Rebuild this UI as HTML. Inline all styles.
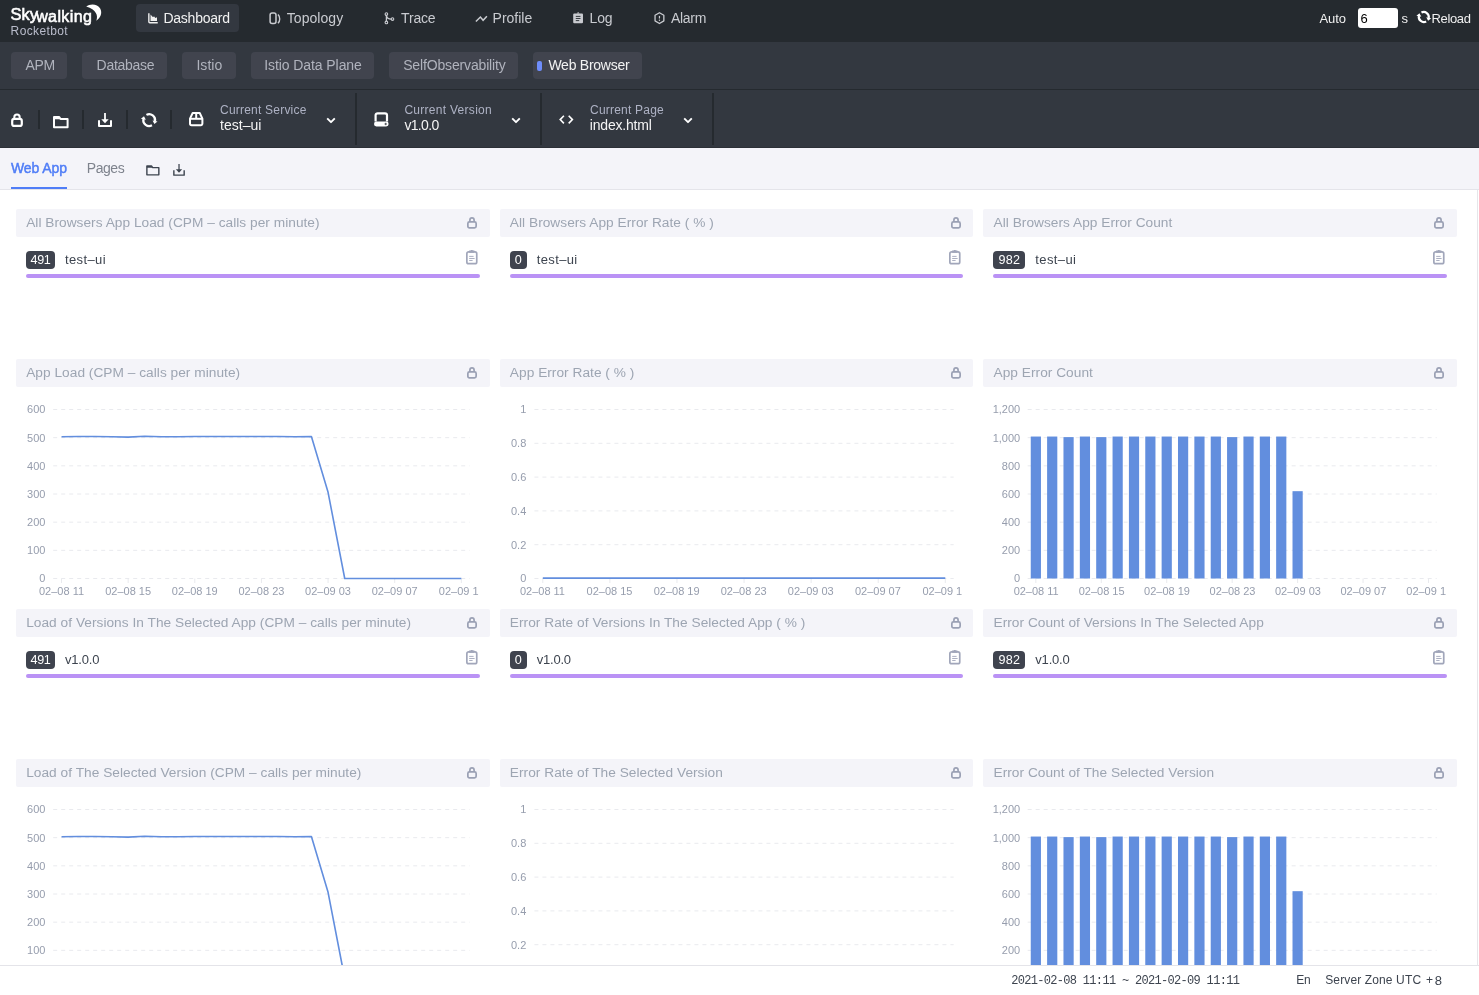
<!DOCTYPE html>
<html lang="en">
<head>
<meta charset="utf-8">
<title>SkyWalking</title>
<style>
*{box-sizing:border-box;margin:0;padding:0}
html,body{width:1479px;height:995px;overflow:hidden;background:#fff}
body{font-family:"Liberation Sans",sans-serif;font-size:14px;color:#3d444f;position:relative}
.abs{position:absolute}
.t{position:absolute;white-space:pre;line-height:1}
svg{position:absolute;overflow:visible}
</style>
</head>
<body>
<div id="root" style="position:absolute;left:0;top:0;width:1479px;height:995px;overflow:hidden;will-change:transform;background:transparent">
<div class="abs" style="left:16.0px;top:209px;width:473.67px;height:28px;background:#f4f4f9;border-radius:2px;"></div>
<div class="t" style="left:26.20px;top:216.30px;font-size:13.7px;color:#9da5b2;letter-spacing:0.028px;">All Browsers App Load (CPM – calls per minute)</div>
<svg style="left:467.0px;top:217.0px" width="10.0" height="11.6" viewBox="0 0 10.0 11.6"><rect x="0.85" y="4.90" width="8.30" height="5.90" rx="1.60" fill="none" stroke="#9aa0b4" stroke-width="1.7"/><path d="M2.90 4.90V3.10a2.10 2.20 0 0 1 4.20 0V4.90" fill="none" stroke="#9aa0b4" stroke-width="1.7"/></svg>
<div class="abs" style="left:26.0px;top:251px;width:29.0px;height:18px;background:#3f434e;border-radius:4px;"></div>
<div class="t" style="left:30.50px;top:254.33px;font-size:12.6px;color:#ffffff;letter-spacing:-0.339px;">491</div>
<div class="t" style="left:65.00px;top:252.90px;font-size:13px;color:#3d444f;letter-spacing:0.384px;">test–ui</div>
<svg style="left:465.8px;top:250px" width="11.6" height="14.5" viewBox="0 0 11.6 14.5"><rect x="0.85" y="1.9" width="9.9" height="11.8" rx="1.8" fill="none" stroke="#a1a6ba" stroke-width="1.7"/><path d="M3.2 1.6h5.2" stroke="#a1a6ba" stroke-width="2.4" fill="none"/><path d="M5.8 0v1.8" stroke="#a1a6ba" stroke-width="1.8" fill="none"/><path d="M3.2 6.4h4.4M3.2 8.5h5.4M3.2 10.5h3.4" stroke="#a1a6ba" stroke-width="0.9" fill="none"/></svg>
<div class="abs" style="left:26.0px;top:274px;width:453.67px;height:4px;background:#ba92f5;border-radius:2px;"></div>
<div class="abs" style="left:16.0px;top:609px;width:473.67px;height:28px;background:#f4f4f9;border-radius:2px;"></div>
<div class="t" style="left:26.20px;top:616.30px;font-size:13.7px;color:#9da5b2;letter-spacing:0.028px;">Load of Versions In The Selected App (CPM – calls per minute)</div>
<svg style="left:467.0px;top:617.0px" width="10.0" height="11.6" viewBox="0 0 10.0 11.6"><rect x="0.85" y="4.90" width="8.30" height="5.90" rx="1.60" fill="none" stroke="#9aa0b4" stroke-width="1.7"/><path d="M2.90 4.90V3.10a2.10 2.20 0 0 1 4.20 0V4.90" fill="none" stroke="#9aa0b4" stroke-width="1.7"/></svg>
<div class="abs" style="left:26.0px;top:651px;width:29.0px;height:18px;background:#3f434e;border-radius:4px;"></div>
<div class="t" style="left:30.50px;top:654.33px;font-size:12.6px;color:#ffffff;letter-spacing:-0.339px;">491</div>
<div class="t" style="left:65.00px;top:652.90px;font-size:13px;color:#3d444f;letter-spacing:-0.204px;">v1.0.0</div>
<svg style="left:465.8px;top:650px" width="11.6" height="14.5" viewBox="0 0 11.6 14.5"><rect x="0.85" y="1.9" width="9.9" height="11.8" rx="1.8" fill="none" stroke="#a1a6ba" stroke-width="1.7"/><path d="M3.2 1.6h5.2" stroke="#a1a6ba" stroke-width="2.4" fill="none"/><path d="M5.8 0v1.8" stroke="#a1a6ba" stroke-width="1.8" fill="none"/><path d="M3.2 6.4h4.4M3.2 8.5h5.4M3.2 10.5h3.4" stroke="#a1a6ba" stroke-width="0.9" fill="none"/></svg>
<div class="abs" style="left:26.0px;top:674px;width:453.67px;height:4px;background:#ba92f5;border-radius:2px;"></div>
<div class="abs" style="left:499.67px;top:209px;width:473.67px;height:28px;background:#f4f4f9;border-radius:2px;"></div>
<div class="t" style="left:509.87px;top:216.30px;font-size:13.7px;color:#9da5b2;letter-spacing:0.027px;">All Browsers App Error Rate ( % )</div>
<svg style="left:950.67px;top:217.0px" width="10.0" height="11.6" viewBox="0 0 10.0 11.6"><rect x="0.85" y="4.90" width="8.30" height="5.90" rx="1.60" fill="none" stroke="#9aa0b4" stroke-width="1.7"/><path d="M2.90 4.90V3.10a2.10 2.20 0 0 1 4.20 0V4.90" fill="none" stroke="#9aa0b4" stroke-width="1.7"/></svg>
<div class="abs" style="left:509.67px;top:251px;width:17.0px;height:18px;background:#3f434e;border-radius:4px;"></div>
<div class="t" style="left:514.66px;top:254.33px;font-size:12.6px;color:#ffffff;">0</div>
<div class="t" style="left:536.67px;top:252.90px;font-size:13px;color:#3d444f;letter-spacing:0.384px;">test–ui</div>
<svg style="left:949.47px;top:250px" width="11.6" height="14.5" viewBox="0 0 11.6 14.5"><rect x="0.85" y="1.9" width="9.9" height="11.8" rx="1.8" fill="none" stroke="#a1a6ba" stroke-width="1.7"/><path d="M3.2 1.6h5.2" stroke="#a1a6ba" stroke-width="2.4" fill="none"/><path d="M5.8 0v1.8" stroke="#a1a6ba" stroke-width="1.8" fill="none"/><path d="M3.2 6.4h4.4M3.2 8.5h5.4M3.2 10.5h3.4" stroke="#a1a6ba" stroke-width="0.9" fill="none"/></svg>
<div class="abs" style="left:509.67px;top:274px;width:453.67px;height:4px;background:#ba92f5;border-radius:2px;"></div>
<div class="abs" style="left:499.67px;top:609px;width:473.67px;height:28px;background:#f4f4f9;border-radius:2px;"></div>
<div class="t" style="left:509.87px;top:616.30px;font-size:13.7px;color:#9da5b2;letter-spacing:0.027px;">Error Rate of Versions In The Selected App ( % )</div>
<svg style="left:950.67px;top:617.0px" width="10.0" height="11.6" viewBox="0 0 10.0 11.6"><rect x="0.85" y="4.90" width="8.30" height="5.90" rx="1.60" fill="none" stroke="#9aa0b4" stroke-width="1.7"/><path d="M2.90 4.90V3.10a2.10 2.20 0 0 1 4.20 0V4.90" fill="none" stroke="#9aa0b4" stroke-width="1.7"/></svg>
<div class="abs" style="left:509.67px;top:651px;width:17.0px;height:18px;background:#3f434e;border-radius:4px;"></div>
<div class="t" style="left:514.66px;top:654.33px;font-size:12.6px;color:#ffffff;">0</div>
<div class="t" style="left:536.67px;top:652.90px;font-size:13px;color:#3d444f;letter-spacing:-0.204px;">v1.0.0</div>
<svg style="left:949.47px;top:650px" width="11.6" height="14.5" viewBox="0 0 11.6 14.5"><rect x="0.85" y="1.9" width="9.9" height="11.8" rx="1.8" fill="none" stroke="#a1a6ba" stroke-width="1.7"/><path d="M3.2 1.6h5.2" stroke="#a1a6ba" stroke-width="2.4" fill="none"/><path d="M5.8 0v1.8" stroke="#a1a6ba" stroke-width="1.8" fill="none"/><path d="M3.2 6.4h4.4M3.2 8.5h5.4M3.2 10.5h3.4" stroke="#a1a6ba" stroke-width="0.9" fill="none"/></svg>
<div class="abs" style="left:509.67px;top:674px;width:453.67px;height:4px;background:#ba92f5;border-radius:2px;"></div>
<div class="abs" style="left:983.33px;top:209px;width:473.67px;height:28px;background:#f4f4f9;border-radius:2px;"></div>
<div class="t" style="left:993.53px;top:216.30px;font-size:13.7px;color:#9da5b2;letter-spacing:0.028px;">All Browsers App Error Count</div>
<svg style="left:1434.33px;top:217.0px" width="10.0" height="11.6" viewBox="0 0 10.0 11.6"><rect x="0.85" y="4.90" width="8.30" height="5.90" rx="1.60" fill="none" stroke="#9aa0b4" stroke-width="1.7"/><path d="M2.90 4.90V3.10a2.10 2.20 0 0 1 4.20 0V4.90" fill="none" stroke="#9aa0b4" stroke-width="1.7"/></svg>
<div class="abs" style="left:993.33px;top:251px;width:32.0px;height:18px;background:#3f434e;border-radius:4px;"></div>
<div class="t" style="left:998.53px;top:254.33px;font-size:12.6px;color:#ffffff;letter-spacing:0.195px;">982</div>
<div class="t" style="left:1035.33px;top:252.90px;font-size:13px;color:#3d444f;letter-spacing:0.384px;">test–ui</div>
<svg style="left:1433.13px;top:250px" width="11.6" height="14.5" viewBox="0 0 11.6 14.5"><rect x="0.85" y="1.9" width="9.9" height="11.8" rx="1.8" fill="none" stroke="#a1a6ba" stroke-width="1.7"/><path d="M3.2 1.6h5.2" stroke="#a1a6ba" stroke-width="2.4" fill="none"/><path d="M5.8 0v1.8" stroke="#a1a6ba" stroke-width="1.8" fill="none"/><path d="M3.2 6.4h4.4M3.2 8.5h5.4M3.2 10.5h3.4" stroke="#a1a6ba" stroke-width="0.9" fill="none"/></svg>
<div class="abs" style="left:993.33px;top:274px;width:453.67px;height:4px;background:#ba92f5;border-radius:2px;"></div>
<div class="abs" style="left:983.33px;top:609px;width:473.67px;height:28px;background:#f4f4f9;border-radius:2px;"></div>
<div class="t" style="left:993.53px;top:616.30px;font-size:13.7px;color:#9da5b2;letter-spacing:0.028px;">Error Count of Versions In The Selected App</div>
<svg style="left:1434.33px;top:617.0px" width="10.0" height="11.6" viewBox="0 0 10.0 11.6"><rect x="0.85" y="4.90" width="8.30" height="5.90" rx="1.60" fill="none" stroke="#9aa0b4" stroke-width="1.7"/><path d="M2.90 4.90V3.10a2.10 2.20 0 0 1 4.20 0V4.90" fill="none" stroke="#9aa0b4" stroke-width="1.7"/></svg>
<div class="abs" style="left:993.33px;top:651px;width:32.0px;height:18px;background:#3f434e;border-radius:4px;"></div>
<div class="t" style="left:998.53px;top:654.33px;font-size:12.6px;color:#ffffff;letter-spacing:0.195px;">982</div>
<div class="t" style="left:1035.33px;top:652.90px;font-size:13px;color:#3d444f;letter-spacing:-0.204px;">v1.0.0</div>
<svg style="left:1433.13px;top:650px" width="11.6" height="14.5" viewBox="0 0 11.6 14.5"><rect x="0.85" y="1.9" width="9.9" height="11.8" rx="1.8" fill="none" stroke="#a1a6ba" stroke-width="1.7"/><path d="M3.2 1.6h5.2" stroke="#a1a6ba" stroke-width="2.4" fill="none"/><path d="M5.8 0v1.8" stroke="#a1a6ba" stroke-width="1.8" fill="none"/><path d="M3.2 6.4h4.4M3.2 8.5h5.4M3.2 10.5h3.4" stroke="#a1a6ba" stroke-width="0.9" fill="none"/></svg>
<div class="abs" style="left:993.33px;top:674px;width:453.67px;height:4px;background:#ba92f5;border-radius:2px;"></div>
<div class="abs" style="left:16.0px;top:359px;width:473.67px;height:28px;background:#f4f4f9;border-radius:2px;"></div>
<div class="t" style="left:26.20px;top:366.30px;font-size:13.7px;color:#9da5b2;letter-spacing:0.028px;">App Load (CPM – calls per minute)</div>
<svg style="left:467.0px;top:367.0px" width="10.0" height="11.6" viewBox="0 0 10.0 11.6"><rect x="0.85" y="4.90" width="8.30" height="5.90" rx="1.60" fill="none" stroke="#9aa0b4" stroke-width="1.7"/><path d="M2.90 4.90V3.10a2.10 2.20 0 0 1 4.20 0V4.90" fill="none" stroke="#9aa0b4" stroke-width="1.7"/></svg>
<div class="t" style="left:39.28px;top:573.49px;font-size:11px;color:#969dad;">0</div>
<div class="t" style="left:27.04px;top:545.32px;font-size:11px;color:#969dad;">100</div>
<div class="t" style="left:27.04px;top:517.16px;font-size:11px;color:#969dad;">200</div>
<div class="t" style="left:27.04px;top:488.99px;font-size:11px;color:#969dad;">300</div>
<div class="t" style="left:27.04px;top:460.82px;font-size:11px;color:#969dad;">400</div>
<div class="t" style="left:27.04px;top:432.66px;font-size:11px;color:#969dad;">500</div>
<div class="t" style="left:27.04px;top:404.49px;font-size:11px;color:#969dad;">600</div>
<svg style="left:16.00px;top:359px" width="473.67" height="250"><path d="M37.20 219.50H453.67" stroke="#e9eaee" stroke-width="1" stroke-dasharray="4 4" fill="none"/><path d="M37.20 191.33H453.67" stroke="#e9eaee" stroke-width="1" stroke-dasharray="4 4" fill="none"/><path d="M37.20 163.17H453.67" stroke="#e9eaee" stroke-width="1" stroke-dasharray="4 4" fill="none"/><path d="M37.20 135.00H453.67" stroke="#e9eaee" stroke-width="1" stroke-dasharray="4 4" fill="none"/><path d="M37.20 106.83H453.67" stroke="#e9eaee" stroke-width="1" stroke-dasharray="4 4" fill="none"/><path d="M37.20 78.67H453.67" stroke="#e9eaee" stroke-width="1" stroke-dasharray="4 4" fill="none"/><path d="M37.20 50.50H453.67" stroke="#e9eaee" stroke-width="1" stroke-dasharray="4 4" fill="none"/><path d="M45.53 219.50v4.5" stroke="#e9eaee" stroke-width="1" fill="none"/><path d="M112.16 219.50v4.5" stroke="#e9eaee" stroke-width="1" fill="none"/><path d="M178.80 219.50v4.5" stroke="#e9eaee" stroke-width="1" fill="none"/><path d="M245.44 219.50v4.5" stroke="#e9eaee" stroke-width="1" fill="none"/><path d="M312.07 219.50v4.5" stroke="#e9eaee" stroke-width="1" fill="none"/><path d="M378.71 219.50v4.5" stroke="#e9eaee" stroke-width="1" fill="none"/><path d="M445.34 219.50v4.5" stroke="#e9eaee" stroke-width="1" fill="none"/><polyline points="45.53,77.82 62.19,77.54 78.85,77.54 95.51,77.82 112.16,78.10 128.82,77.26 145.48,77.82 162.14,77.82 178.80,77.54 195.46,77.54 212.12,77.54 228.78,77.54 245.44,77.54 262.09,77.54 278.75,77.82 295.41,77.54 312.07,133.31 328.73,219.50 345.39,219.50 362.05,219.50 378.71,219.50 395.36,219.50 412.02,219.50 428.68,219.50 445.34,219.50" fill="none" stroke="#628ede" stroke-width="1.6" stroke-linejoin="round"/></svg>
<div class="abs" style="left:26.00px;top:581px;width:453.67px;height:20px;overflow:hidden">
<div class="t" style="left:12.99px;top:4.69px;font-size:11px;color:#969dad">02–08 11</div>
<div class="t" style="left:79.22px;top:4.69px;font-size:11px;color:#969dad">02–08 15</div>
<div class="t" style="left:145.85px;top:4.69px;font-size:11px;color:#969dad">02–08 19</div>
<div class="t" style="left:212.49px;top:4.69px;font-size:11px;color:#969dad">02–08 23</div>
<div class="t" style="left:279.12px;top:4.69px;font-size:11px;color:#969dad">02–09 03</div>
<div class="t" style="left:345.76px;top:4.69px;font-size:11px;color:#969dad">02–09 07</div>
<div class="t" style="left:412.80px;top:4.69px;font-size:11px;color:#969dad">02–09 1</div>
</div>
<div class="abs" style="left:499.67px;top:359px;width:473.67px;height:28px;background:#f4f4f9;border-radius:2px;"></div>
<div class="t" style="left:509.87px;top:366.30px;font-size:13.7px;color:#9da5b2;letter-spacing:0.028px;">App Error Rate ( % )</div>
<svg style="left:950.67px;top:367.0px" width="10.0" height="11.6" viewBox="0 0 10.0 11.6"><rect x="0.85" y="4.90" width="8.30" height="5.90" rx="1.60" fill="none" stroke="#9aa0b4" stroke-width="1.7"/><path d="M2.90 4.90V3.10a2.10 2.20 0 0 1 4.20 0V4.90" fill="none" stroke="#9aa0b4" stroke-width="1.7"/></svg>
<div class="t" style="left:520.18px;top:573.49px;font-size:11px;color:#969dad;">0</div>
<div class="t" style="left:511.00px;top:539.69px;font-size:11px;color:#969dad;">0.2</div>
<div class="t" style="left:511.00px;top:505.89px;font-size:11px;color:#969dad;">0.4</div>
<div class="t" style="left:511.00px;top:472.09px;font-size:11px;color:#969dad;">0.6</div>
<div class="t" style="left:511.00px;top:438.29px;font-size:11px;color:#969dad;">0.8</div>
<div class="t" style="left:520.18px;top:404.49px;font-size:11px;color:#969dad;">1</div>
<svg style="left:499.67px;top:359px" width="473.67" height="250"><path d="M34.43 219.50H453.67" stroke="#e9eaee" stroke-width="1" stroke-dasharray="4 4" fill="none"/><path d="M34.43 185.70H453.67" stroke="#e9eaee" stroke-width="1" stroke-dasharray="4 4" fill="none"/><path d="M34.43 151.90H453.67" stroke="#e9eaee" stroke-width="1" stroke-dasharray="4 4" fill="none"/><path d="M34.43 118.10H453.67" stroke="#e9eaee" stroke-width="1" stroke-dasharray="4 4" fill="none"/><path d="M34.43 84.30H453.67" stroke="#e9eaee" stroke-width="1" stroke-dasharray="4 4" fill="none"/><path d="M34.43 50.50H453.67" stroke="#e9eaee" stroke-width="1" stroke-dasharray="4 4" fill="none"/><path d="M42.81 219.50v4.5" stroke="#e9eaee" stroke-width="1" fill="none"/><path d="M109.89 219.50v4.5" stroke="#e9eaee" stroke-width="1" fill="none"/><path d="M176.97 219.50v4.5" stroke="#e9eaee" stroke-width="1" fill="none"/><path d="M244.05 219.50v4.5" stroke="#e9eaee" stroke-width="1" fill="none"/><path d="M311.13 219.50v4.5" stroke="#e9eaee" stroke-width="1" fill="none"/><path d="M378.21 219.50v4.5" stroke="#e9eaee" stroke-width="1" fill="none"/><path d="M445.29 219.50v4.5" stroke="#e9eaee" stroke-width="1" fill="none"/><path d="M42.81 219.10H445.29" stroke="#628ede" stroke-width="1.6" fill="none"/></svg>
<div class="abs" style="left:509.67px;top:581px;width:453.67px;height:20px;overflow:hidden">
<div class="t" style="left:10.28px;top:4.69px;font-size:11px;color:#969dad">02–08 11</div>
<div class="t" style="left:76.95px;top:4.69px;font-size:11px;color:#969dad">02–08 15</div>
<div class="t" style="left:144.03px;top:4.69px;font-size:11px;color:#969dad">02–08 19</div>
<div class="t" style="left:211.10px;top:4.69px;font-size:11px;color:#969dad">02–08 23</div>
<div class="t" style="left:278.18px;top:4.69px;font-size:11px;color:#969dad">02–09 03</div>
<div class="t" style="left:345.26px;top:4.69px;font-size:11px;color:#969dad">02–09 07</div>
<div class="t" style="left:412.75px;top:4.69px;font-size:11px;color:#969dad">02–09 1</div>
</div>
<div class="abs" style="left:983.33px;top:359px;width:473.67px;height:28px;background:#f4f4f9;border-radius:2px;"></div>
<div class="t" style="left:993.53px;top:366.30px;font-size:13.7px;color:#9da5b2;letter-spacing:0.030px;">App Error Count</div>
<svg style="left:1434.33px;top:367.0px" width="10.0" height="11.6" viewBox="0 0 10.0 11.6"><rect x="0.85" y="4.90" width="8.30" height="5.90" rx="1.60" fill="none" stroke="#9aa0b4" stroke-width="1.7"/><path d="M2.90 4.90V3.10a2.10 2.20 0 0 1 4.20 0V4.90" fill="none" stroke="#9aa0b4" stroke-width="1.7"/></svg>
<div class="t" style="left:1014.08px;top:573.49px;font-size:11px;color:#969dad;">0</div>
<div class="t" style="left:1001.84px;top:545.32px;font-size:11px;color:#969dad;">200</div>
<div class="t" style="left:1001.84px;top:517.16px;font-size:11px;color:#969dad;">400</div>
<div class="t" style="left:1001.84px;top:488.99px;font-size:11px;color:#969dad;">600</div>
<div class="t" style="left:1001.84px;top:460.82px;font-size:11px;color:#969dad;">800</div>
<div class="t" style="left:992.67px;top:432.66px;font-size:11px;color:#969dad;">1,000</div>
<div class="t" style="left:992.67px;top:404.49px;font-size:11px;color:#969dad;">1,200</div>
<svg style="left:983.33px;top:359px" width="473.67" height="250"><path d="M44.67 219.50H453.67" stroke="#e9eaee" stroke-width="1" stroke-dasharray="4 4" fill="none"/><path d="M44.67 191.33H453.67" stroke="#e9eaee" stroke-width="1" stroke-dasharray="4 4" fill="none"/><path d="M44.67 163.17H453.67" stroke="#e9eaee" stroke-width="1" stroke-dasharray="4 4" fill="none"/><path d="M44.67 135.00H453.67" stroke="#e9eaee" stroke-width="1" stroke-dasharray="4 4" fill="none"/><path d="M44.67 106.83H453.67" stroke="#e9eaee" stroke-width="1" stroke-dasharray="4 4" fill="none"/><path d="M44.67 78.67H453.67" stroke="#e9eaee" stroke-width="1" stroke-dasharray="4 4" fill="none"/><path d="M44.67 50.50H453.67" stroke="#e9eaee" stroke-width="1" stroke-dasharray="4 4" fill="none"/><path d="M52.85 219.50v4.5" stroke="#e9eaee" stroke-width="1" fill="none"/><path d="M118.29 219.50v4.5" stroke="#e9eaee" stroke-width="1" fill="none"/><path d="M183.73 219.50v4.5" stroke="#e9eaee" stroke-width="1" fill="none"/><path d="M249.17 219.50v4.5" stroke="#e9eaee" stroke-width="1" fill="none"/><path d="M314.61 219.50v4.5" stroke="#e9eaee" stroke-width="1" fill="none"/><path d="M380.05 219.50v4.5" stroke="#e9eaee" stroke-width="1" fill="none"/><path d="M445.49 219.50v4.5" stroke="#e9eaee" stroke-width="1" fill="none"/><rect x="47.75" y="77.54" width="10.2" height="141.96" fill="#628ede"/><rect x="64.11" y="77.54" width="10.2" height="141.96" fill="#628ede"/><rect x="80.47" y="78.10" width="10.2" height="141.40" fill="#628ede"/><rect x="96.83" y="77.54" width="10.2" height="141.96" fill="#628ede"/><rect x="113.19" y="78.10" width="10.2" height="141.40" fill="#628ede"/><rect x="129.55" y="77.54" width="10.2" height="141.96" fill="#628ede"/><rect x="145.91" y="77.54" width="10.2" height="141.96" fill="#628ede"/><rect x="162.27" y="77.54" width="10.2" height="141.96" fill="#628ede"/><rect x="178.63" y="77.54" width="10.2" height="141.96" fill="#628ede"/><rect x="194.99" y="77.54" width="10.2" height="141.96" fill="#628ede"/><rect x="211.35" y="77.54" width="10.2" height="141.96" fill="#628ede"/><rect x="227.71" y="77.54" width="10.2" height="141.96" fill="#628ede"/><rect x="244.07" y="78.10" width="10.2" height="141.40" fill="#628ede"/><rect x="260.43" y="77.54" width="10.2" height="141.96" fill="#628ede"/><rect x="276.79" y="77.54" width="10.2" height="141.96" fill="#628ede"/><rect x="293.15" y="77.54" width="10.2" height="141.96" fill="#628ede"/><rect x="309.51" y="132.18" width="10.2" height="87.32" fill="#628ede"/></svg>
<div class="abs" style="left:993.33px;top:581px;width:453.67px;height:20px;overflow:hidden">
<div class="t" style="left:20.31px;top:4.69px;font-size:11px;color:#969dad">02–08 11</div>
<div class="t" style="left:85.34px;top:4.69px;font-size:11px;color:#969dad">02–08 15</div>
<div class="t" style="left:150.78px;top:4.69px;font-size:11px;color:#969dad">02–08 19</div>
<div class="t" style="left:216.22px;top:4.69px;font-size:11px;color:#969dad">02–08 23</div>
<div class="t" style="left:281.66px;top:4.69px;font-size:11px;color:#969dad">02–09 03</div>
<div class="t" style="left:347.10px;top:4.69px;font-size:11px;color:#969dad">02–09 07</div>
<div class="t" style="left:412.95px;top:4.69px;font-size:11px;color:#969dad">02–09 1</div>
</div>
<div class="abs" style="left:16.0px;top:759px;width:473.67px;height:28px;background:#f4f4f9;border-radius:2px;"></div>
<div class="t" style="left:26.20px;top:766.30px;font-size:13.7px;color:#9da5b2;letter-spacing:0.028px;">Load of The Selected Version (CPM – calls per minute)</div>
<svg style="left:467.0px;top:767.0px" width="10.0" height="11.6" viewBox="0 0 10.0 11.6"><rect x="0.85" y="4.90" width="8.30" height="5.90" rx="1.60" fill="none" stroke="#9aa0b4" stroke-width="1.7"/><path d="M2.90 4.90V3.10a2.10 2.20 0 0 1 4.20 0V4.90" fill="none" stroke="#9aa0b4" stroke-width="1.7"/></svg>
<div class="t" style="left:39.28px;top:973.49px;font-size:11px;color:#969dad;">0</div>
<div class="t" style="left:27.04px;top:945.32px;font-size:11px;color:#969dad;">100</div>
<div class="t" style="left:27.04px;top:917.16px;font-size:11px;color:#969dad;">200</div>
<div class="t" style="left:27.04px;top:888.99px;font-size:11px;color:#969dad;">300</div>
<div class="t" style="left:27.04px;top:860.82px;font-size:11px;color:#969dad;">400</div>
<div class="t" style="left:27.04px;top:832.66px;font-size:11px;color:#969dad;">500</div>
<div class="t" style="left:27.04px;top:804.49px;font-size:11px;color:#969dad;">600</div>
<svg style="left:16.00px;top:759px" width="473.67" height="250"><path d="M37.20 219.50H453.67" stroke="#e9eaee" stroke-width="1" stroke-dasharray="4 4" fill="none"/><path d="M37.20 191.33H453.67" stroke="#e9eaee" stroke-width="1" stroke-dasharray="4 4" fill="none"/><path d="M37.20 163.17H453.67" stroke="#e9eaee" stroke-width="1" stroke-dasharray="4 4" fill="none"/><path d="M37.20 135.00H453.67" stroke="#e9eaee" stroke-width="1" stroke-dasharray="4 4" fill="none"/><path d="M37.20 106.83H453.67" stroke="#e9eaee" stroke-width="1" stroke-dasharray="4 4" fill="none"/><path d="M37.20 78.67H453.67" stroke="#e9eaee" stroke-width="1" stroke-dasharray="4 4" fill="none"/><path d="M37.20 50.50H453.67" stroke="#e9eaee" stroke-width="1" stroke-dasharray="4 4" fill="none"/><path d="M45.53 219.50v4.5" stroke="#e9eaee" stroke-width="1" fill="none"/><path d="M112.16 219.50v4.5" stroke="#e9eaee" stroke-width="1" fill="none"/><path d="M178.80 219.50v4.5" stroke="#e9eaee" stroke-width="1" fill="none"/><path d="M245.44 219.50v4.5" stroke="#e9eaee" stroke-width="1" fill="none"/><path d="M312.07 219.50v4.5" stroke="#e9eaee" stroke-width="1" fill="none"/><path d="M378.71 219.50v4.5" stroke="#e9eaee" stroke-width="1" fill="none"/><path d="M445.34 219.50v4.5" stroke="#e9eaee" stroke-width="1" fill="none"/><polyline points="45.53,77.82 62.19,77.54 78.85,77.54 95.51,77.82 112.16,78.10 128.82,77.26 145.48,77.82 162.14,77.82 178.80,77.54 195.46,77.54 212.12,77.54 228.78,77.54 245.44,77.54 262.09,77.54 278.75,77.82 295.41,77.54 312.07,133.31 328.73,219.50 345.39,219.50 362.05,219.50 378.71,219.50 395.36,219.50 412.02,219.50 428.68,219.50 445.34,219.50" fill="none" stroke="#628ede" stroke-width="1.6" stroke-linejoin="round"/></svg>
<div class="abs" style="left:26.00px;top:981px;width:453.67px;height:20px;overflow:hidden">
<div class="t" style="left:12.99px;top:4.69px;font-size:11px;color:#969dad">02–08 11</div>
<div class="t" style="left:79.22px;top:4.69px;font-size:11px;color:#969dad">02–08 15</div>
<div class="t" style="left:145.85px;top:4.69px;font-size:11px;color:#969dad">02–08 19</div>
<div class="t" style="left:212.49px;top:4.69px;font-size:11px;color:#969dad">02–08 23</div>
<div class="t" style="left:279.12px;top:4.69px;font-size:11px;color:#969dad">02–09 03</div>
<div class="t" style="left:345.76px;top:4.69px;font-size:11px;color:#969dad">02–09 07</div>
<div class="t" style="left:412.80px;top:4.69px;font-size:11px;color:#969dad">02–09 1</div>
</div>
<div class="abs" style="left:499.67px;top:759px;width:473.67px;height:28px;background:#f4f4f9;border-radius:2px;"></div>
<div class="t" style="left:509.87px;top:766.30px;font-size:13.7px;color:#9da5b2;letter-spacing:0.028px;">Error Rate of The Selected Version</div>
<svg style="left:950.67px;top:767.0px" width="10.0" height="11.6" viewBox="0 0 10.0 11.6"><rect x="0.85" y="4.90" width="8.30" height="5.90" rx="1.60" fill="none" stroke="#9aa0b4" stroke-width="1.7"/><path d="M2.90 4.90V3.10a2.10 2.20 0 0 1 4.20 0V4.90" fill="none" stroke="#9aa0b4" stroke-width="1.7"/></svg>
<div class="t" style="left:520.18px;top:973.49px;font-size:11px;color:#969dad;">0</div>
<div class="t" style="left:511.00px;top:939.69px;font-size:11px;color:#969dad;">0.2</div>
<div class="t" style="left:511.00px;top:905.89px;font-size:11px;color:#969dad;">0.4</div>
<div class="t" style="left:511.00px;top:872.09px;font-size:11px;color:#969dad;">0.6</div>
<div class="t" style="left:511.00px;top:838.29px;font-size:11px;color:#969dad;">0.8</div>
<div class="t" style="left:520.18px;top:804.49px;font-size:11px;color:#969dad;">1</div>
<svg style="left:499.67px;top:759px" width="473.67" height="250"><path d="M34.43 219.50H453.67" stroke="#e9eaee" stroke-width="1" stroke-dasharray="4 4" fill="none"/><path d="M34.43 185.70H453.67" stroke="#e9eaee" stroke-width="1" stroke-dasharray="4 4" fill="none"/><path d="M34.43 151.90H453.67" stroke="#e9eaee" stroke-width="1" stroke-dasharray="4 4" fill="none"/><path d="M34.43 118.10H453.67" stroke="#e9eaee" stroke-width="1" stroke-dasharray="4 4" fill="none"/><path d="M34.43 84.30H453.67" stroke="#e9eaee" stroke-width="1" stroke-dasharray="4 4" fill="none"/><path d="M34.43 50.50H453.67" stroke="#e9eaee" stroke-width="1" stroke-dasharray="4 4" fill="none"/><path d="M42.81 219.50v4.5" stroke="#e9eaee" stroke-width="1" fill="none"/><path d="M109.89 219.50v4.5" stroke="#e9eaee" stroke-width="1" fill="none"/><path d="M176.97 219.50v4.5" stroke="#e9eaee" stroke-width="1" fill="none"/><path d="M244.05 219.50v4.5" stroke="#e9eaee" stroke-width="1" fill="none"/><path d="M311.13 219.50v4.5" stroke="#e9eaee" stroke-width="1" fill="none"/><path d="M378.21 219.50v4.5" stroke="#e9eaee" stroke-width="1" fill="none"/><path d="M445.29 219.50v4.5" stroke="#e9eaee" stroke-width="1" fill="none"/><path d="M42.81 219.10H445.29" stroke="#628ede" stroke-width="1.6" fill="none"/></svg>
<div class="abs" style="left:509.67px;top:981px;width:453.67px;height:20px;overflow:hidden">
<div class="t" style="left:10.28px;top:4.69px;font-size:11px;color:#969dad">02–08 11</div>
<div class="t" style="left:76.95px;top:4.69px;font-size:11px;color:#969dad">02–08 15</div>
<div class="t" style="left:144.03px;top:4.69px;font-size:11px;color:#969dad">02–08 19</div>
<div class="t" style="left:211.10px;top:4.69px;font-size:11px;color:#969dad">02–08 23</div>
<div class="t" style="left:278.18px;top:4.69px;font-size:11px;color:#969dad">02–09 03</div>
<div class="t" style="left:345.26px;top:4.69px;font-size:11px;color:#969dad">02–09 07</div>
<div class="t" style="left:412.75px;top:4.69px;font-size:11px;color:#969dad">02–09 1</div>
</div>
<div class="abs" style="left:983.33px;top:759px;width:473.67px;height:28px;background:#f4f4f9;border-radius:2px;"></div>
<div class="t" style="left:993.53px;top:766.30px;font-size:13.7px;color:#9da5b2;letter-spacing:0.028px;">Error Count of The Selected Version</div>
<svg style="left:1434.33px;top:767.0px" width="10.0" height="11.6" viewBox="0 0 10.0 11.6"><rect x="0.85" y="4.90" width="8.30" height="5.90" rx="1.60" fill="none" stroke="#9aa0b4" stroke-width="1.7"/><path d="M2.90 4.90V3.10a2.10 2.20 0 0 1 4.20 0V4.90" fill="none" stroke="#9aa0b4" stroke-width="1.7"/></svg>
<div class="t" style="left:1014.08px;top:973.49px;font-size:11px;color:#969dad;">0</div>
<div class="t" style="left:1001.84px;top:945.32px;font-size:11px;color:#969dad;">200</div>
<div class="t" style="left:1001.84px;top:917.16px;font-size:11px;color:#969dad;">400</div>
<div class="t" style="left:1001.84px;top:888.99px;font-size:11px;color:#969dad;">600</div>
<div class="t" style="left:1001.84px;top:860.82px;font-size:11px;color:#969dad;">800</div>
<div class="t" style="left:992.67px;top:832.66px;font-size:11px;color:#969dad;">1,000</div>
<div class="t" style="left:992.67px;top:804.49px;font-size:11px;color:#969dad;">1,200</div>
<svg style="left:983.33px;top:759px" width="473.67" height="250"><path d="M44.67 219.50H453.67" stroke="#e9eaee" stroke-width="1" stroke-dasharray="4 4" fill="none"/><path d="M44.67 191.33H453.67" stroke="#e9eaee" stroke-width="1" stroke-dasharray="4 4" fill="none"/><path d="M44.67 163.17H453.67" stroke="#e9eaee" stroke-width="1" stroke-dasharray="4 4" fill="none"/><path d="M44.67 135.00H453.67" stroke="#e9eaee" stroke-width="1" stroke-dasharray="4 4" fill="none"/><path d="M44.67 106.83H453.67" stroke="#e9eaee" stroke-width="1" stroke-dasharray="4 4" fill="none"/><path d="M44.67 78.67H453.67" stroke="#e9eaee" stroke-width="1" stroke-dasharray="4 4" fill="none"/><path d="M44.67 50.50H453.67" stroke="#e9eaee" stroke-width="1" stroke-dasharray="4 4" fill="none"/><path d="M52.85 219.50v4.5" stroke="#e9eaee" stroke-width="1" fill="none"/><path d="M118.29 219.50v4.5" stroke="#e9eaee" stroke-width="1" fill="none"/><path d="M183.73 219.50v4.5" stroke="#e9eaee" stroke-width="1" fill="none"/><path d="M249.17 219.50v4.5" stroke="#e9eaee" stroke-width="1" fill="none"/><path d="M314.61 219.50v4.5" stroke="#e9eaee" stroke-width="1" fill="none"/><path d="M380.05 219.50v4.5" stroke="#e9eaee" stroke-width="1" fill="none"/><path d="M445.49 219.50v4.5" stroke="#e9eaee" stroke-width="1" fill="none"/><rect x="47.75" y="77.54" width="10.2" height="141.96" fill="#628ede"/><rect x="64.11" y="77.54" width="10.2" height="141.96" fill="#628ede"/><rect x="80.47" y="78.10" width="10.2" height="141.40" fill="#628ede"/><rect x="96.83" y="77.54" width="10.2" height="141.96" fill="#628ede"/><rect x="113.19" y="78.10" width="10.2" height="141.40" fill="#628ede"/><rect x="129.55" y="77.54" width="10.2" height="141.96" fill="#628ede"/><rect x="145.91" y="77.54" width="10.2" height="141.96" fill="#628ede"/><rect x="162.27" y="77.54" width="10.2" height="141.96" fill="#628ede"/><rect x="178.63" y="77.54" width="10.2" height="141.96" fill="#628ede"/><rect x="194.99" y="77.54" width="10.2" height="141.96" fill="#628ede"/><rect x="211.35" y="77.54" width="10.2" height="141.96" fill="#628ede"/><rect x="227.71" y="77.54" width="10.2" height="141.96" fill="#628ede"/><rect x="244.07" y="78.10" width="10.2" height="141.40" fill="#628ede"/><rect x="260.43" y="77.54" width="10.2" height="141.96" fill="#628ede"/><rect x="276.79" y="77.54" width="10.2" height="141.96" fill="#628ede"/><rect x="293.15" y="77.54" width="10.2" height="141.96" fill="#628ede"/><rect x="309.51" y="132.18" width="10.2" height="87.32" fill="#628ede"/></svg>
<div class="abs" style="left:993.33px;top:981px;width:453.67px;height:20px;overflow:hidden">
<div class="t" style="left:20.31px;top:4.69px;font-size:11px;color:#969dad">02–08 11</div>
<div class="t" style="left:85.34px;top:4.69px;font-size:11px;color:#969dad">02–08 15</div>
<div class="t" style="left:150.78px;top:4.69px;font-size:11px;color:#969dad">02–08 19</div>
<div class="t" style="left:216.22px;top:4.69px;font-size:11px;color:#969dad">02–08 23</div>
<div class="t" style="left:281.66px;top:4.69px;font-size:11px;color:#969dad">02–09 03</div>
<div class="t" style="left:347.10px;top:4.69px;font-size:11px;color:#969dad">02–09 07</div>
<div class="t" style="left:412.95px;top:4.69px;font-size:11px;color:#969dad">02–09 1</div>
</div>
<div class="abs" style="left:1477px;top:190px;width:1px;height:775px;background:#e6e6ea;"></div>
<div class="abs" style="left:0px;top:0px;width:1479px;height:42px;background:#252a2f;"></div>
<div class="abs" style="left:0px;top:42px;width:1479px;height:47px;background:#333840;"></div>
<div class="abs" style="left:0px;top:89px;width:1479px;height:1px;background:#252a2f;"></div>
<div class="abs" style="left:0px;top:90px;width:1479px;height:58px;background:#333840;"></div>
<div class="abs" style="left:0px;top:147px;width:1479px;height:1px;background:#2c3037;"></div>
<div class="abs" style="left:0px;top:148px;width:1479px;height:41px;background:#f4f4f9;"></div>
<div class="abs" style="left:0px;top:189px;width:1479px;height:1px;background:#e4e4ea;"></div>
<div class="t" style="left:10.60px;top:6.13px;font-size:16.5px;color:#ffffff;letter-spacing:-0.105px;-webkit-text-stroke:0.55px #fff;">Sky</div>
<div class="t" style="left:36.20px;top:8.76px;font-size:16px;color:#ffffff;letter-spacing:0.377px;-webkit-text-stroke:0.55px #fff;">walking</div>
<svg style="left:85px;top:3.9px" width="17" height="18" viewBox="0 0 17 18"><path d="M1.2 2.6C5 -0.5 12.500 -0.3 15.200 4.600C17.600 9 15.600 14.200 11.300 16.700C13.400 11.800 11.400 5.800 1.200 2.600Z" fill="#ffffff"/></svg>
<div class="t" style="left:10.60px;top:25.14px;font-size:12px;color:#b9bccb;letter-spacing:0.385px;">Rocketbot</div>
<div class="abs" style="left:136px;top:4px;width:103px;height:28px;background:#333840;border-radius:4px;"></div>
<svg style="left:147.5px;top:13.3px" width="10" height="10.6" viewBox="0 0 10 10.6"><path d="M0.85 0.2v8.6a1 1 0 0 0 1 1h7.9" fill="none" stroke="#f0f0f0" stroke-width="1.4"/><path d="M2.5 7.9V1.6l2.3 2.4 1.4-.5 1.2 1.4 1.6-.6v3.6z" fill="#f0f0f0"/></svg>
<div class="t" style="left:163.40px;top:11.25px;font-size:14px;color:#f2f2f2;letter-spacing:-0.233px;">Dashboard</div>
<svg style="left:269.4px;top:12.4px" width="12" height="12.4" viewBox="0 0 12 12.4"><rect x="1.1" y="1" width="5.9" height="10.4" rx="2" fill="none" stroke="#c9cbd0" stroke-width="1.5"/><path d="M9 2.6c2.3 2.4 2.3 6.2 0 8.6" fill="none" stroke="#c9cbd0" stroke-width="1.4"/></svg>
<div class="t" style="left:286.80px;top:11.25px;font-size:14px;color:#c9cbd0;letter-spacing:0.044px;">Topology</div>
<svg style="left:384px;top:12.4px" width="11" height="12.6" viewBox="0 0 11 12.6"><path d="M2.4 3.4v5.8M2.6 4.2c.4 2.6 2.6 2.8 4.6 2.9" fill="none" stroke="#c9cbd0" stroke-width="1.3"/><circle cx="2.4" cy="2.1" r="1.3" fill="none" stroke="#c9cbd0" stroke-width="1.1"/><circle cx="2.4" cy="10.4" r="1.3" fill="none" stroke="#c9cbd0" stroke-width="1.1"/><circle cx="8.5" cy="7.1" r="1.3" fill="none" stroke="#c9cbd0" stroke-width="1.1"/></svg>
<div class="t" style="left:401.10px;top:11.25px;font-size:14px;color:#c9cbd0;letter-spacing:-0.176px;">Trace</div>
<svg style="left:475px;top:14.5px" width="13" height="8" viewBox="0 0 13 8"><path d="M0.9 6.5l4.5-4.5 2.7 3.3 3.8-4.1" fill="none" stroke="#c9cbd0" stroke-width="1.5"/></svg>
<div class="t" style="left:492.60px;top:11.25px;font-size:14px;color:#c9cbd0;letter-spacing:-0.012px;">Profile</div>
<svg style="left:573.3px;top:12.4px" width="10.2" height="11.5" viewBox="0 0 10.2 11.5"><path d="M1.2 1.5h7.8a1 1 0 0 1 1 1v7.8a1 1 0 0 1-1 1h-7.8a1 1 0 0 1-1-1v-7.8a1 1 0 0 1 1-1z" fill="#c9cbd0"/><path d="M3.6 1.6l1.5-1.5 1.5 1.5z" fill="#c9cbd0"/><path d="M2.8 4.4h4.7M2.8 6.5h4.7M2.8 8.6h3.4" stroke="#252a2f" stroke-width="0.9" fill="none"/></svg>
<div class="t" style="left:589.50px;top:11.25px;font-size:14px;color:#c9cbd0;letter-spacing:-0.120px;">Log</div>
<svg style="left:654px;top:12.4px" width="11" height="12.6" viewBox="0 0 11 12.6"><path d="M5.45 0.7l4.4 2.6v5.6l-4.4 2.6-4.4-2.6v-5.6z" fill="none" stroke="#c9cbd0" stroke-width="1.3" stroke-linejoin="round"/><path d="M5.45 3.9v2.6" stroke="#c9cbd0" stroke-width="1.2"/><circle cx="5.45" cy="8.2" r="0.7" fill="#c9cbd0"/></svg>
<div class="t" style="left:670.90px;top:11.25px;font-size:14px;color:#c9cbd0;letter-spacing:-0.272px;">Alarm</div>
<div class="t" style="left:1319.40px;top:11.90px;font-size:13px;color:#f0f0f0;letter-spacing:-0.037px;">Auto</div>
<div class="abs" style="left:1358px;top:8px;width:40px;height:20px;background:#ffffff;border-radius:3px;"></div>
<div class="t" style="left:1360.60px;top:11.90px;font-size:13px;color:#000000;">6</div>
<div class="t" style="left:1401.50px;top:11.90px;font-size:13px;color:#f0f0f0;">s</div>
<svg style="left:0;top:0" width="1" height="1"><path d="M1421.45 12.59A5.0 5.0 0 0 1 1428.69 18.04" fill="none" stroke="#ffffff" stroke-width="2.2"/><path d="M1428.13 20.68L1431.25 18.28L1426.26 17.22Z" fill="#ffffff"/><path d="M1426.15 21.41A5.0 5.0 0 0 1 1418.91 15.96" fill="none" stroke="#ffffff" stroke-width="2.2"/><path d="M1419.47 13.32L1416.35 15.72L1421.34 16.78Z" fill="#ffffff"/></svg>
<div class="t" style="left:1431.60px;top:11.90px;font-size:13px;color:#f0f0f0;letter-spacing:-0.367px;">Reload</div>
<div class="abs" style="left:11px;top:52px;width:56px;height:27px;background:#41444e;border-radius:4px;"></div>
<div class="t" style="left:25.60px;top:58.25px;font-size:14px;color:#b0b3bd;letter-spacing:-0.381px;">APM</div>
<div class="abs" style="left:82px;top:52px;width:85px;height:27px;background:#41444e;border-radius:4px;"></div>
<div class="t" style="left:96.60px;top:58.25px;font-size:14px;color:#b0b3bd;letter-spacing:-0.292px;">Database</div>
<div class="abs" style="left:182px;top:52px;width:54px;height:27px;background:#41444e;border-radius:4px;"></div>
<div class="t" style="left:196.40px;top:58.25px;font-size:14px;color:#b0b3bd;letter-spacing:0.062px;">Istio</div>
<div class="abs" style="left:251px;top:52px;width:123px;height:27px;background:#41444e;border-radius:4px;"></div>
<div class="t" style="left:264.20px;top:58.25px;font-size:14px;color:#b0b3bd;letter-spacing:-0.078px;">Istio Data Plane</div>
<div class="abs" style="left:389px;top:52px;width:129px;height:27px;background:#41444e;border-radius:4px;"></div>
<div class="t" style="left:403.20px;top:58.25px;font-size:14px;color:#b0b3bd;letter-spacing:-0.156px;">SelfObservability</div>
<div class="abs" style="left:533px;top:52px;width:109px;height:27px;background:#41444e;border-radius:4px;"></div>
<div class="t" style="left:548.40px;top:58.25px;font-size:14px;color:#f2f2f2;letter-spacing:-0.253px;">Web Browser</div>
<div class="abs" style="left:537px;top:61px;width:5px;height:10px;background:#6e8dfb;border-radius:2px;"></div>
<svg style="left:11.1px;top:112.8px" width="12" height="14" viewBox="0 0 12 14"><rect x="1.2" y="5.9" width="9.6" height="7" rx="2" fill="none" stroke="#ffffff" stroke-width="2.2"/><path d="M3.3 6V4.2a2.7 2.7 0 0 1 5.4 0V6" fill="none" stroke="#ffffff" stroke-width="2"/></svg>
<svg style="left:53.1px;top:115.8px" width="15.6" height="12.2" viewBox="0 0 15.6 12.2"><path d="M1 1h5.2l1.4 2h7v8.2H1z" fill="none" stroke="#ffffff" stroke-width="2.00" stroke-linejoin="round"/><path d="M1 1h5.2l1.4 2.2H1z" fill="#ffffff"/></svg>
<svg style="left:98.1px;top:113px" width="14.0" height="14.0" viewBox="0 0 14 14"><path d="M1 7.2v5.8h12V7.2" fill="none" stroke="#ffffff" stroke-width="2.00" stroke-linejoin="round"/><path d="M7 0v8" stroke="#ffffff" stroke-width="1.80" fill="none"/><path d="M3.3 6.2h7.4L7 10.2z" fill="#ffffff"/></svg>
<svg style="left:0;top:0" width="1" height="1"><path d="M146.43 114.89A5.9 5.9 0 0 1 154.97 121.33" fill="none" stroke="#ffffff" stroke-width="2.2"/><path d="M154.41 123.97L157.53 121.56L152.54 120.50Z" fill="#ffffff"/><path d="M151.97 125.31A5.9 5.9 0 0 1 143.43 118.87" fill="none" stroke="#ffffff" stroke-width="2.2"/><path d="M143.99 116.23L140.87 118.64L145.86 119.70Z" fill="#ffffff"/></svg>
<div class="abs" style="left:38.2px;top:110px;width:1.8px;height:19px;background:#252a2f;"></div>
<div class="abs" style="left:82.3px;top:110px;width:1.8px;height:19px;background:#252a2f;"></div>
<div class="abs" style="left:126.3px;top:110px;width:1.8px;height:19px;background:#252a2f;"></div>
<div class="abs" style="left:170.4px;top:110px;width:1.8px;height:19px;background:#252a2f;"></div>
<div class="abs" style="left:355px;top:93px;width:2px;height:52px;background:#252a2f;"></div>
<div class="abs" style="left:540px;top:93px;width:2px;height:52px;background:#252a2f;"></div>
<div class="abs" style="left:712px;top:93px;width:2px;height:52px;background:#252a2f;"></div>
<svg style="left:188.9px;top:111.7px" width="14.4" height="14.2" viewBox="0 0 14.4 14.2"><path d="M3.700 1h7l2.700 5.600v5a1.600 1.600 0 0 1-1.600 1.600H2.600A1.600 1.600 0 0 1 1 11.600V6.600z" fill="none" stroke="#ffffff" stroke-width="2" stroke-linejoin="round"/><path d="M1 6.800h12.400" stroke="#ffffff" stroke-width="2"/><path d="M7.200 1v5.800" stroke="#ffffff" stroke-width="2"/></svg>
<div class="t" style="left:220.00px;top:103.64px;font-size:12px;color:#aeb2c4;letter-spacing:0.215px;">Current Service</div>
<div class="t" style="left:220.00px;top:118.15px;font-size:14px;color:#f4f4f4;letter-spacing:0.021px;">test–ui</div>
<svg style="left:325.8px;top:117.2px" width="10" height="7" viewBox="0 0 10 7"><path d="M1.2 1.4L5 5.2 8.8 1.4" fill="none" stroke="#ffffff" stroke-width="1.9" stroke-linejoin="round"/></svg>
<svg style="left:373.8px;top:111.8px" width="14.6" height="14.6" viewBox="0 0 14.6 14.6"><path d="M1.600 9.500v-6.200a2 2 0 0 1 2-2h7.400a2 2 0 0 1 2 2v6.200" fill="none" stroke="#ffffff" stroke-width="2.200"/><rect x="0" y="9.600" width="14.600" height="4.800" rx="2.400" fill="#ffffff"/><path d="M10.500 12h2.400M11.700 10.800v2.400" stroke="#333840" stroke-width="0.8"/></svg>
<div class="t" style="left:404.40px;top:103.64px;font-size:12px;color:#aeb2c4;letter-spacing:0.282px;">Current Version</div>
<div class="t" style="left:404.40px;top:118.15px;font-size:14px;color:#f4f4f4;letter-spacing:-0.657px;">v1.0.0</div>
<svg style="left:510.79999999999995px;top:117.2px" width="10" height="7" viewBox="0 0 10 7"><path d="M1.2 1.4L5 5.2 8.8 1.4" fill="none" stroke="#ffffff" stroke-width="1.9" stroke-linejoin="round"/></svg>
<svg style="left:558.7px;top:114.6px" width="14.6" height="9.2" viewBox="0 0 14.6 9.2"><path d="M4.900 0.800L1.200 4.600l3.700 3.800M9.700 0.800l3.700 3.800-3.700 3.800" fill="none" stroke="#ffffff" stroke-width="1.600"/></svg>
<div class="t" style="left:590.00px;top:103.64px;font-size:12px;color:#aeb2c4;letter-spacing:0.219px;">Current Page</div>
<div class="t" style="left:589.80px;top:118.15px;font-size:14px;color:#f4f4f4;letter-spacing:-0.201px;">index.html</div>
<svg style="left:682.9px;top:117.2px" width="10" height="7" viewBox="0 0 10 7"><path d="M1.2 1.4L5 5.2 8.8 1.4" fill="none" stroke="#ffffff" stroke-width="1.9" stroke-linejoin="round"/></svg>
<div class="t" style="left:10.90px;top:161.35px;font-size:14px;color:#4f7df7;letter-spacing:-0.052px;-webkit-text-stroke:0.45px #4f7df7;">Web App</div>
<div class="abs" style="left:11px;top:187px;width:56px;height:2px;background:#4f7df7;"></div>
<div class="t" style="left:86.80px;top:161.35px;font-size:14px;color:#7e838d;letter-spacing:-0.461px;">Pages</div>
<svg style="left:146.2px;top:164.9px" width="13.73" height="10.74" viewBox="0 0 15.6 12.2"><path d="M1 1h5.2l1.4 2h7v8.2H1z" fill="none" stroke="#3d444f" stroke-width="1.59" stroke-linejoin="round"/><path d="M1 1h5.2l1.4 2.2H1z" fill="#3d444f"/></svg>
<svg style="left:172.9px;top:164.0px" width="12.04" height="12.04" viewBox="0 0 14 14"><path d="M1 7.2v5.8h12V7.2" fill="none" stroke="#3d444f" stroke-width="1.63" stroke-linejoin="round"/><path d="M7 0v8" stroke="#3d444f" stroke-width="1.47" fill="none"/><path d="M3.3 6.2h7.4L7 10.2z" fill="#3d444f"/></svg>
<div class="abs" style="left:0px;top:965px;width:1479px;height:1px;background:#e4e4e9;"></div>
<div class="abs" style="left:0px;top:966px;width:1479px;height:29px;background:#ffffff;"></div>
<div class="t" style="left:1011.20px;top:974.80px;font-size:12px;color:#3d444f;letter-spacing:-0.687px;font-family:'Liberation Mono',monospace;">2021-02-08 11:11 ~ 2021-02-09 11:11</div>
<div class="t" style="left:1296.20px;top:973.84px;font-size:12px;color:#3d444f;letter-spacing:-0.144px;">En</div>
<div class="t" style="left:1325.20px;top:973.84px;font-size:12px;color:#3d444f;letter-spacing:0.131px;">Server Zone UTC</div>
<div class="t" style="left:1426.00px;top:973.84px;font-size:12px;color:#3d444f;">+</div>
<div class="t" style="left:1434.80px;top:973.60px;font-size:13px;color:#3d444f;">8</div>
</div>
</body>
</html>
